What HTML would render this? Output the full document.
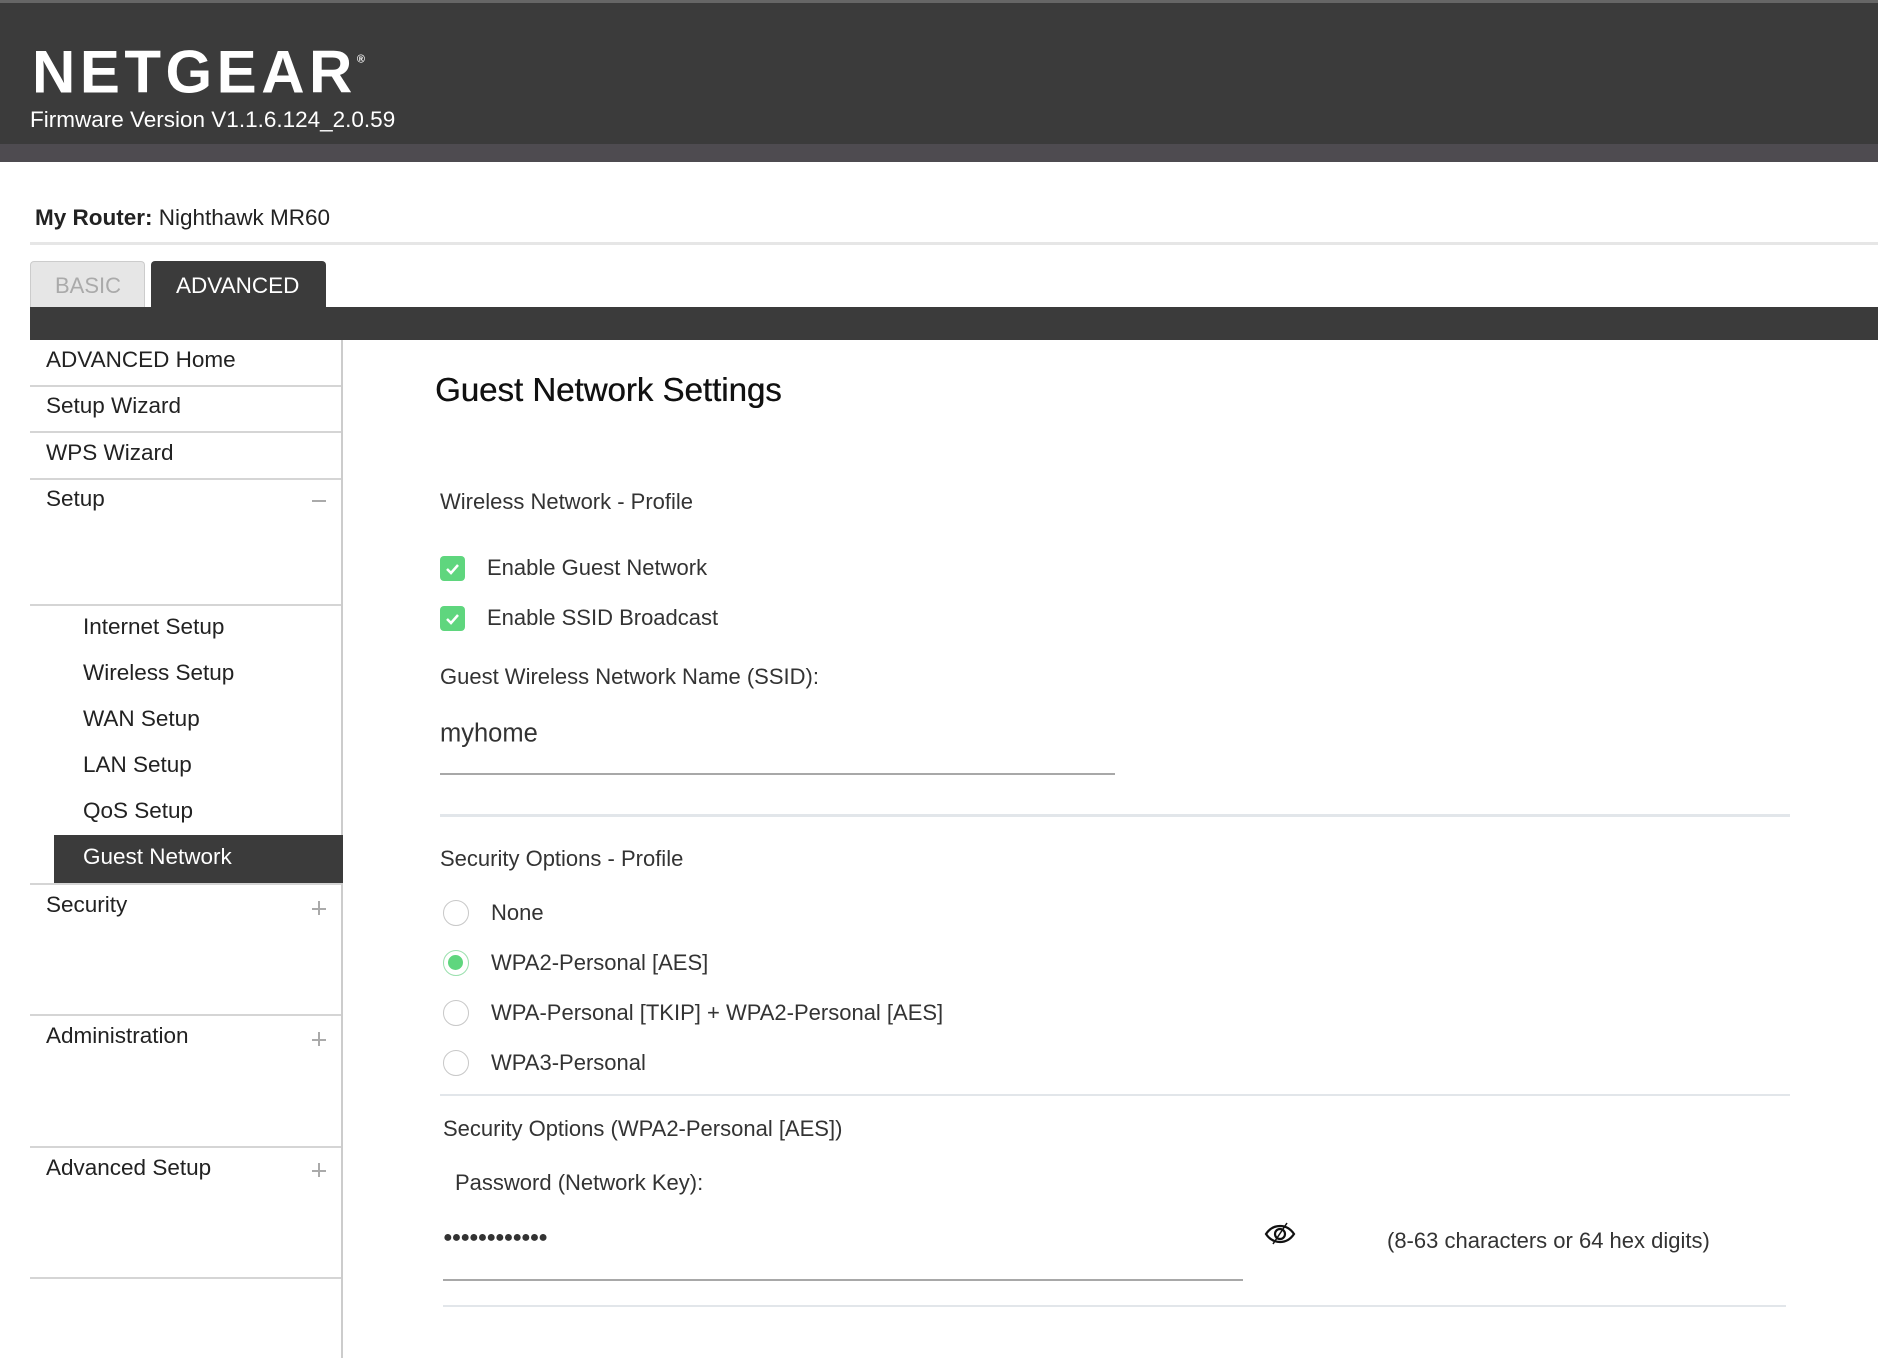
<!DOCTYPE html>
<html><head><meta charset="utf-8"><style>
*{margin:0;padding:0;box-sizing:border-box}
body{width:1878px;height:1358px;position:relative;overflow:hidden;background:#fff;font-family:"Liberation Sans",sans-serif;color:#2b2b2b}
.a{position:absolute;white-space:nowrap}
.t{transform:translateY(-50%)}
.cb{position:absolute;width:25px;height:25px;background:#5fd67e;border-radius:4px}
.rd{position:absolute;width:26px;height:26px;border:1.5px solid #c8c8c8;border-radius:50%}
.sep{position:absolute;left:30px;width:311px;height:1.5px;background:#d5d5d5}
.m{font-size:22.5px;color:#222}
.c{font-size:22px;color:#333}
.pl{position:absolute;left:312px;width:14px;height:1.5px;background:#aaa}
</style></head><body>
<div class="a" style="left:0;top:0;width:1878px;height:144px;background:#3b3b3b"></div>
<div class="a" style="left:0;top:0;width:1878px;height:3px;background:#666"></div>
<div class="a" style="left:0;top:144px;width:1878px;height:18px;background:#4e4b50"></div>
<div class="a t" style="left:32px;top:72px;font-size:60px;font-weight:bold;color:#fff;letter-spacing:4.5px">NETGEAR<sup style="font-size:11px;vertical-align:30px;letter-spacing:0">®</sup></div>
<div class="a t" style="left:30px;top:120px;font-size:22.5px;color:#fff">Firmware Version V1.1.6.124_2.0.59</div>
<div class="a t" style="left:35px;top:218px;font-size:22.5px;color:#222"><span style="font-weight:bold">My Router:</span> Nighthawk MR60</div>
<div class="a" style="left:30px;top:242px;width:1848px;height:3px;background:#e6e6e6"></div>
<div class="a" style="left:30px;top:261px;width:115px;height:46px;background:#e6e6e6;border:1px solid #ccc;border-bottom:none;border-radius:4px 4px 0 0"></div>
<div class="a t" style="left:55px;top:286px;font-size:22px;color:#aaa">BASIC</div>
<div class="a" style="left:151px;top:261px;width:175px;height:47px;background:#3b3b3b;border-radius:4px 4px 0 0"></div>
<div class="a t" style="left:176px;top:286px;font-size:22.5px;color:#fff">ADVANCED</div>
<div class="a" style="left:30px;top:307px;width:1848px;height:33px;background:#3b3b3b"></div>
<div class="a" style="left:341px;top:340px;width:1.5px;height:1018px;background:#ccc"></div>
<div class="a t m" style="left:46px;top:360px">ADVANCED Home</div>
<div class="sep" style="top:385px"></div>
<div class="a t m" style="left:46px;top:406px">Setup Wizard</div>
<div class="sep" style="top:431px"></div>
<div class="a t m" style="left:46px;top:453px">WPS Wizard</div>
<div class="sep" style="top:478px"></div>
<div class="a t m" style="left:46px;top:499px">Setup</div>
<div class="pl" style="top:500px"></div>
<div class="sep" style="top:604px"></div>
<div class="a t m" style="left:83px;top:627px">Internet Setup</div>
<div class="a t m" style="left:83px;top:673px">Wireless Setup</div>
<div class="a t m" style="left:83px;top:719px">WAN Setup</div>
<div class="a t m" style="left:83px;top:765px">LAN Setup</div>
<div class="a t m" style="left:83px;top:811px">QoS Setup</div>
<div class="a" style="left:54px;top:835px;width:289px;height:48px;background:#3b3b3b"></div>
<div class="a t m" style="left:83px;top:857px;color:#fff">Guest Network</div>
<div class="sep" style="top:883px"></div>
<div class="a t m" style="left:46px;top:905px">Security</div>
<div class="pl" style="top:908px"></div><div class="a" style="left:318px;top:901px;width:1.5px;height:14px;background:#aaa"></div>
<div class="sep" style="top:1014px"></div>
<div class="a t m" style="left:46px;top:1036px">Administration</div>
<div class="pl" style="top:1039px"></div><div class="a" style="left:318px;top:1032px;width:1.5px;height:14px;background:#aaa"></div>
<div class="sep" style="top:1146px"></div>
<div class="a t m" style="left:46px;top:1168px">Advanced Setup</div>
<div class="pl" style="top:1170px"></div><div class="a" style="left:318px;top:1163px;width:1.5px;height:14px;background:#aaa"></div>
<div class="sep" style="top:1277px"></div>

<div class="a t" style="left:435px;top:390px;font-size:33px;color:#111;text-shadow:0.4px 0 0 #111">Guest Network Settings</div>
<div class="a t c" style="left:440px;top:502px">Wireless Network - Profile</div>
<div class="cb" style="left:440px;top:556px"><svg width="25" height="25"><path d="M7 13l4 4 7-8" stroke="#fff" stroke-width="2.5" fill="none"/></svg></div>
<div class="a t c" style="left:487px;top:568px">Enable Guest Network</div>
<div class="cb" style="left:440px;top:606px"><svg width="25" height="25"><path d="M7 13l4 4 7-8" stroke="#fff" stroke-width="2.5" fill="none"/></svg></div>
<div class="a t c" style="left:487px;top:618px">Enable SSID Broadcast</div>
<div class="a t c" style="left:440px;top:677px">Guest Wireless Network Name (SSID):</div>
<div class="a t" style="left:440px;top:734px;font-size:25.5px;color:#333">myhome</div>
<div class="a" style="left:440px;top:773px;width:675px;height:1.5px;background:#a8a8a8"></div>
<div class="a" style="left:440px;top:814px;width:1350px;height:3px;background:#e2e6ea"></div>
<div class="a t c" style="left:440px;top:859px">Security Options - Profile</div>
<div class="rd" style="left:443px;top:900px"></div>
<div class="a t c" style="left:491px;top:913px">None</div>
<div class="rd" style="left:443px;top:950px;border-color:#9be0ae"><div style="position:absolute;left:4px;top:4px;width:15px;height:15px;border-radius:50%;background:#5fd67e"></div></div>
<div class="a t c" style="left:491px;top:963px">WPA2-Personal [AES]</div>
<div class="rd" style="left:443px;top:1000px"></div>
<div class="a t c" style="left:491px;top:1013px">WPA-Personal [TKIP] + WPA2-Personal [AES]</div>
<div class="rd" style="left:443px;top:1050px"></div>
<div class="a t c" style="left:491px;top:1063px">WPA3-Personal</div>
<div class="a" style="left:440px;top:1094px;width:1350px;height:2px;background:#e2e6ea"></div>
<div class="a t c" style="left:443px;top:1129px">Security Options (WPA2-Personal [AES])</div>
<div class="a t c" style="left:455px;top:1183px">Password (Network Key):</div>
<div class="a t" style="left:443px;top:1238px;font-size:16px;color:#333;letter-spacing:-1px">●●●●●●●●●●●●</div>
<div class="a" style="left:443px;top:1279px;width:800px;height:1.5px;background:#a8a8a8"></div>
<svg class="a" style="left:1263px;top:1220px" width="34" height="28" viewBox="0 0 34 28"><path d="M3 14c4-6 9-8 14-8s10 2 14 8c-4 6-9 8-14 8s-10-2-14-8z" fill="none" stroke="#111" stroke-width="2.2"/><circle cx="17" cy="14" r="5" fill="none" stroke="#111" stroke-width="2.2"/><path d="M10 24L24 3" stroke="#111" stroke-width="1.5"/></svg>
<div class="a t c" style="left:1387px;top:1241px">(8-63 characters or 64 hex digits)</div>
<div class="a" style="left:443px;top:1305px;width:1343px;height:2px;background:#e2e6ea"></div>
</body></html>
